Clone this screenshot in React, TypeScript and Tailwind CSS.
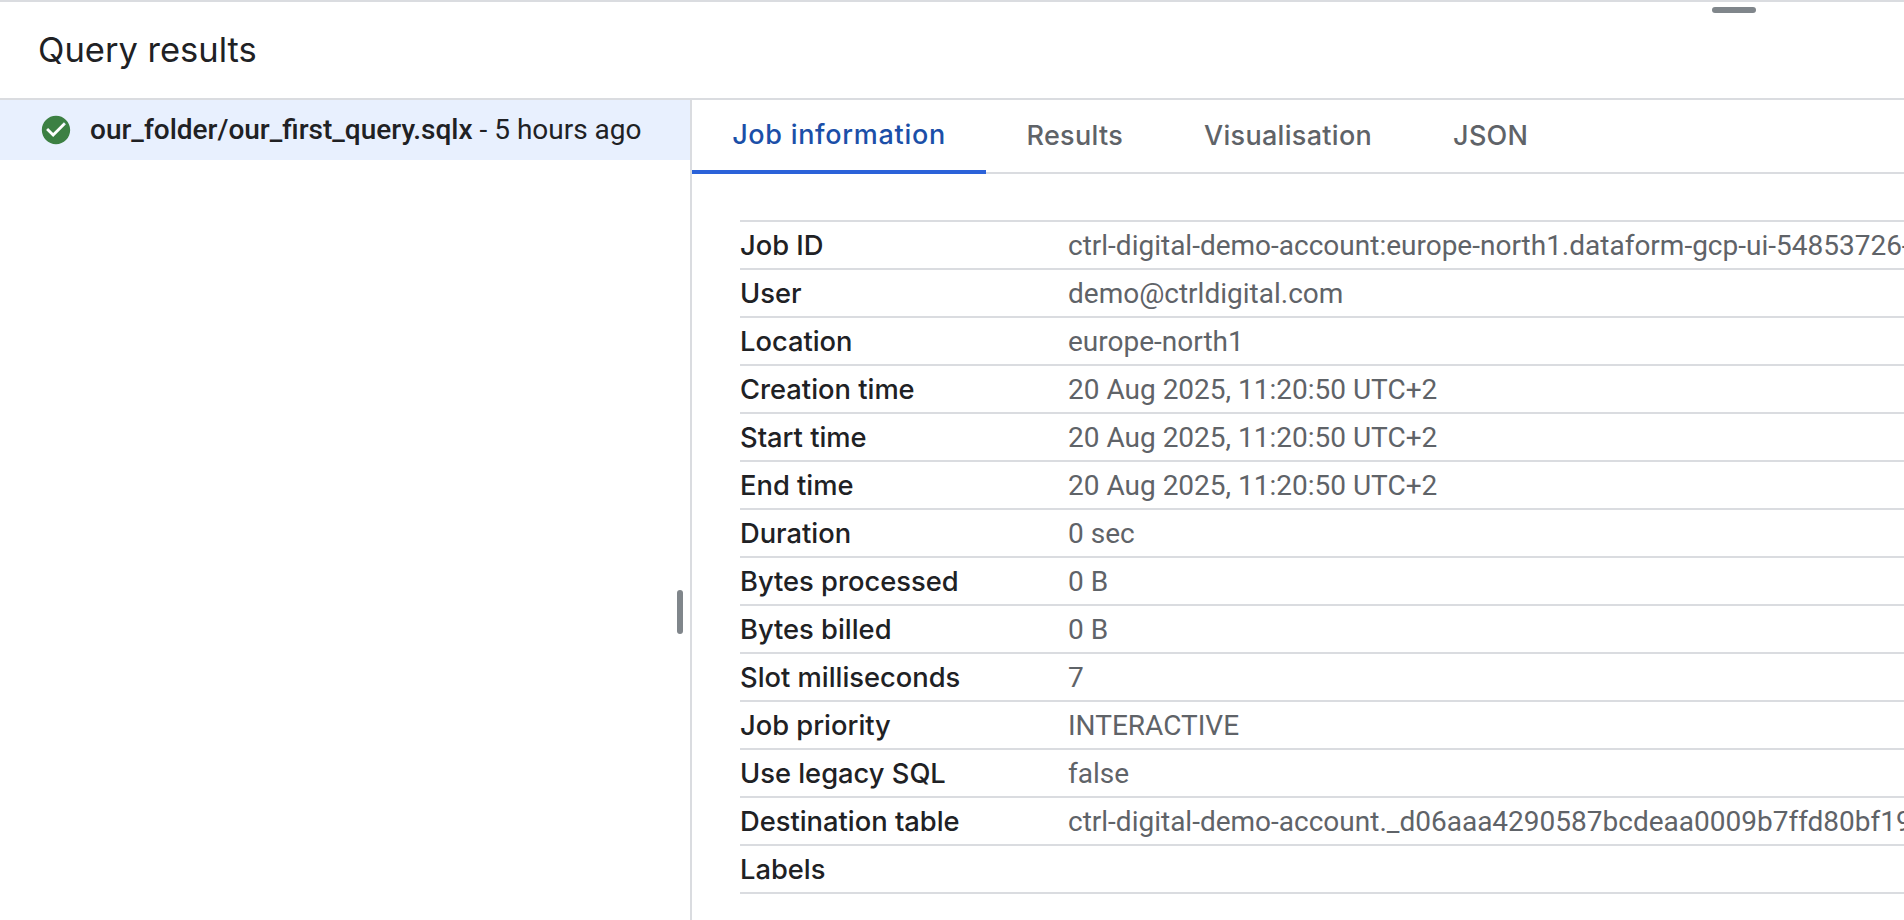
const rows = [
  ["Job ID", "ctrl-digital-demo-account:europe-north1.dataform-gcp-ui-54853726-4e1a-4f5c-9c1b-2f8a"],
  ["User", "demo@ctrldigital.com"],
  ["Location", "europe-north1"],
  ["Creation time", "20 Aug 2025, 11:20:50 UTC+2"],
  ["Start time", "20 Aug 2025, 11:20:50 UTC+2"],
  ["End time", "20 Aug 2025, 11:20:50 UTC+2"],
  ["Duration", "0 sec"],
  ["Bytes processed", "0 B"],
  ["Bytes billed", "0 B"],
  ["Slot milliseconds", "7"],
  ["Job priority", "INTERACTIVE"],
  ["Use legacy SQL", "false"],
  ["Destination table", "ctrl-digital-demo-account._d06aaa4290587bcdeaa0009b7ffd80bf19e2f6a1.anon"],
  ["Labels", ""],
];

const tabs = ["Results", "Visualisation", "JSON"];

function CheckCircle() {
  return (
    <svg viewBox="0 0 24 24" className="h-[34px] w-[34px] shrink-0 fill-[#3c8043]">
      <circle cx="12" cy="12" r="7" fill="#fff" />
      <path d="M12 2C6.48 2 2 6.48 2 12s4.48 10 10 10 10-4.48 10-10S17.52 2 12 2zm-2 15l-5-5 1.41-1.41L10 14.17l7.59-7.59L19 8l-9 9z" />
    </svg>
  );
}

export default function App() {
  return (
    <div className="relative flex h-[920px] w-[1904px] flex-col overflow-hidden border-t-2 border-[#dadce0] bg-white font-['Roboto',sans-serif]">
      {/* drag handles */}
      <div className="absolute left-[1712px] top-[5px] h-[6px] w-[44px] rounded-full bg-[#80868b]" />
      <div className="absolute left-[677px] top-[588px] h-[44px] w-[6px] rounded-full bg-[#80868b]" />

      <div className="flex h-[98px] shrink-0 items-center border-b-2 border-[#dadce0] pb-[1px] pl-[38px] font-['Inter',sans-serif] text-[34.5px] text-[#202124]">
        Query results
      </div>

      <div className="flex min-h-0 flex-1">
        <div className="w-[692px] shrink-0 border-r-2 border-[#dadce0]">
          <div className="flex h-[60px] items-center bg-[#e8f0fe] pl-[39px] text-[28px] text-[#202124]">
            <CheckCircle />
            <span className="ml-[17px] whitespace-nowrap">
              <span className="font-medium">our_folder/our_first_query.sqlx</span> - 5 hours ago
            </span>
          </div>
        </div>

        <div className="min-w-0 flex-1">
          <div className="flex h-[74px] border-b-2 border-[#dadce0] font-['Inter',sans-serif] text-[27px] font-medium tracking-[0.3px] text-[#5f6368]">
            <div className="-mb-[2px] flex w-[294px] items-center justify-center border-b-4 border-[#2b62d9] pt-[1px] tracking-[0.7px] text-[#1b4fa8]">
              Job information
            </div>
            {tabs.map((t) => (
              <div key={t} className="flex items-center px-[40.5px]">
                {t}
              </div>
            ))}
          </div>

          <div className="ml-[48px] mt-[46px] border-t-2 border-[#dadce0]">
            {rows.map(([label, value]) => (
              <div key={label} className="flex h-[48px] items-center border-b-2 border-[#dadce0] pt-[1px]">
                <div className="w-[328px] shrink-0 pt-[1px] font-['Inter',sans-serif] text-[27.3px] font-medium text-[#202124]">{label}</div>
                <div className="whitespace-nowrap text-[28px] text-[#5f6368]">{value}</div>
              </div>
            ))}
          </div>
        </div>
      </div>
    </div>
  );
}
